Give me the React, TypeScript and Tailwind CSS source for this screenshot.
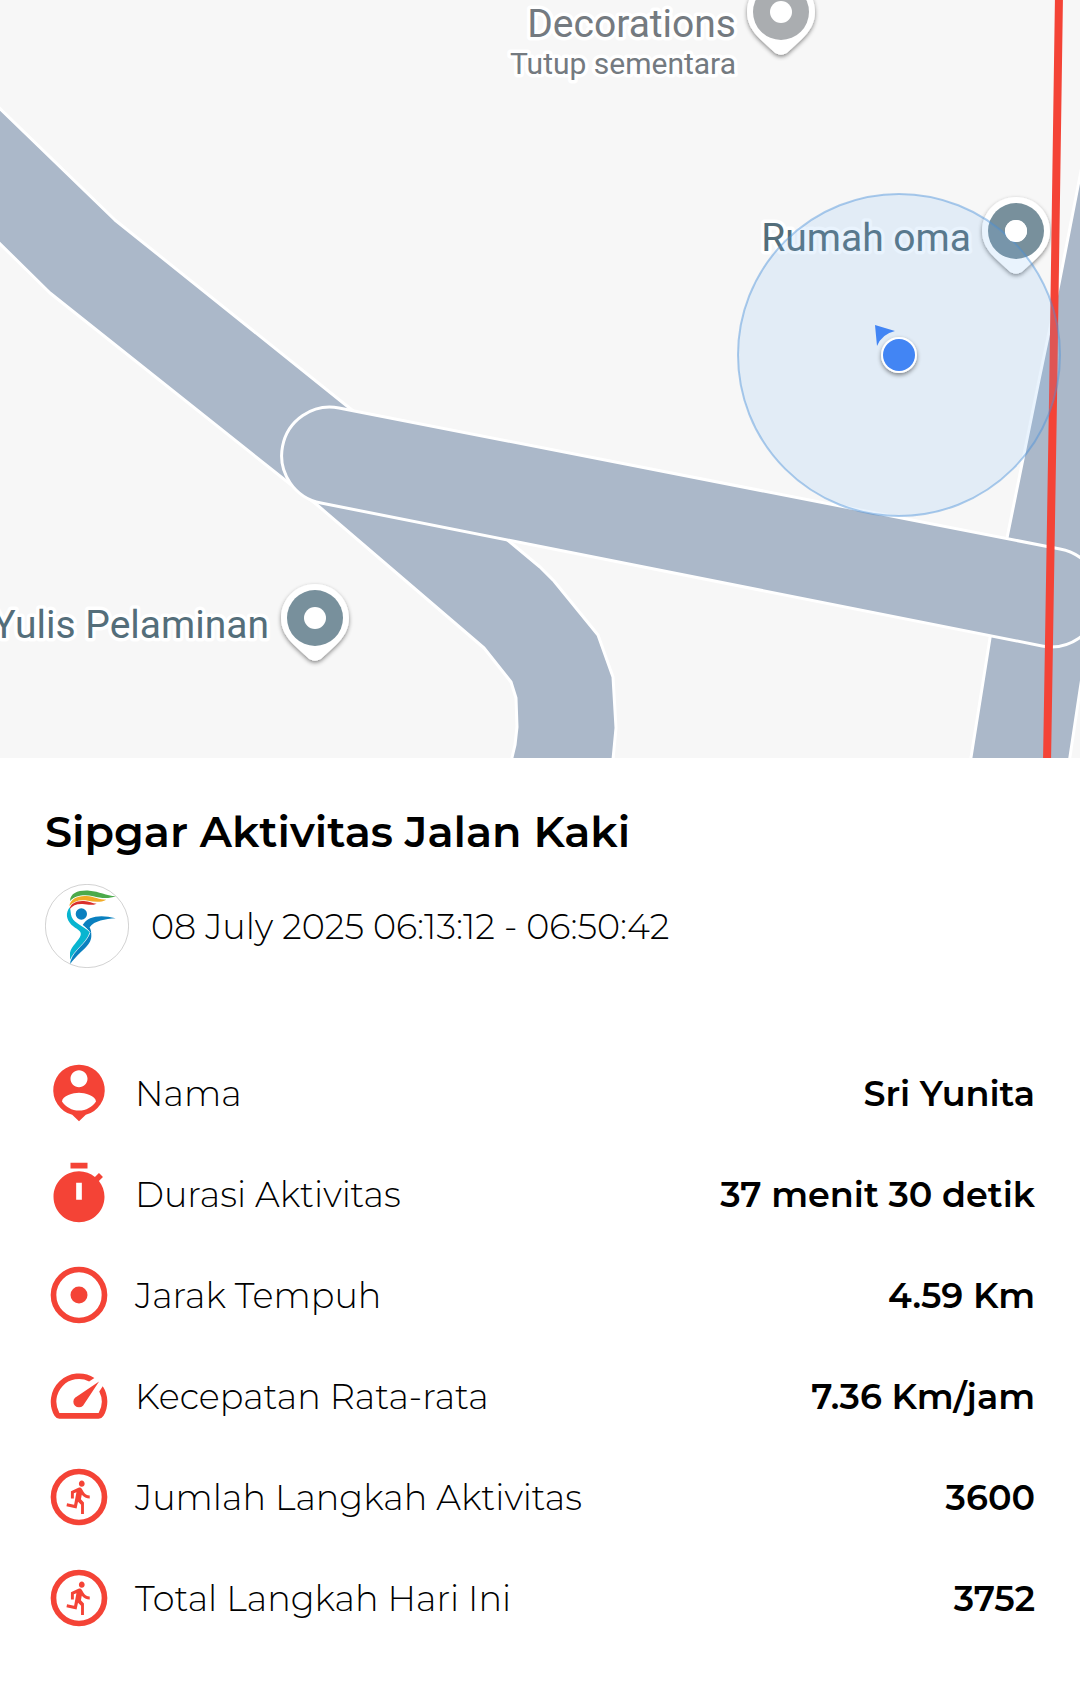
import type { ReactNode } from "react";

interface MapPinProps {
  x: number;
  y: number;
  color: string;
}

interface StatRowProps {
  icon: ReactNode;
  label: string;
  value: string;
}

const PIN_OUTLINE =
  "M0 -34C19 -34 34 -19 34 0C34 11 29 19 21 27L8 39C3 44 -3 44 -8 39L-21 27C-29 19 -34 11 -34 0C-34 -19 -19 -34 0 -34Z";

const MapPin = ({ x, y, color }: MapPinProps) => (
  <g transform={`translate(${x} ${y})`}>
    <path d={PIN_OUTLINE} fill="#fff" filter="url(#pin-shadow)" />
    <circle r="28" fill={color} />
    <circle r="11" fill="#fff" />
  </g>
);

const RouteMap = () => (
  <svg
    viewBox="0 0 1080 758"
    className="block w-full bg-[#f7f7f7]"
    role="img"
    aria-label="Peta rute"
  >
    <defs>
      <filter id="pin-shadow" x="-30%" y="-30%" width="160%" height="160%">
        <feDropShadow dx="0" dy="2" stdDeviation="2" floodOpacity="0.45" />
      </filter>
    </defs>

    {/* Roads */}
    <g fill="#abb8c9" stroke="#fff" strokeWidth="3" strokeLinejoin="round">
      <path d="M-10 99L115 220L352 410L510 542L540 567L554 581L598 635L613 677L616 728L612 770H509L515 745L517 727L516 698L511 682L484 648L316 504L285 480L50 293L-10 234Z" />
      <path d="M1100 76L1080 176L1059 284L1039 380L1007 538L990 638L969 770H1068L1080 690L1100 560Z" />
      <path d="M339 408L1060 549A49 49 0 0 1 1042 646L321 503A48 48 0 0 1 339 408Z" />
    </g>

    {/* Place labels */}
    <g
      fontFamily="Roboto, sans-serif"
      fontSize="39"
      textAnchor="end"
      stroke="#fff"
      strokeWidth="7"
      strokeLinejoin="round"
      paintOrder="stroke"
    >
      <text x="736" y="37" fill="#747a80">
        Decorations
      </text>
      <text x="736" y="74" fontSize="30" fill="#747a80">
        Tutup sementara
      </text>
      <text x="971" y="251" fill="#546e7a">
        Rumah oma
      </text>
      <text x="269" y="638" fill="#546e7a">
        Yulis Pelaminan
      </text>
    </g>

    <MapPin x={781} y={12} color="#aaadb0" />
    <MapPin x={1016} y={231} color="#78909c" />
    <MapPin x={315} y={618} color="#78909c" />

    <path d="M1059 -5L1053 400L1047 763" stroke="#f44336" strokeWidth="8" />

    {/* Current position */}
    <circle
      cx="899"
      cy="355"
      r="161"
      fill="#74b4f0"
      fillOpacity="0.16"
      stroke="#4a90d9"
      strokeOpacity="0.45"
      strokeWidth="2"
    />
    <circle cx="1016" cy="231" r="11" fill="#fff" />
    <path d="M875 325L895 331Q882 334 877 346Z" fill="#4285f4" />
    <circle
      cx="899"
      cy="355"
      r="18"
      fill="#fff"
      filter="url(#pin-shadow)"
    />
    <circle cx="899" cy="355" r="16" fill="#4285f4" />
  </svg>
);

const Logo = () => (
  <svg viewBox="45 282 252 252" className="size-[84px] shrink-0" aria-hidden="true">
    <circle cx="171" cy="408" r="125" fill="#fff" stroke="#bbb" strokeWidth="2" />
    <path
      d="M120 333C121 308 146 300 178 302C208 304 228 317 258 319C236 327 212 325 190 319C164 313 138 315 120 333Z"
      fill="#4caa4b"
    />
    <path
      d="M118 348C121 326 144 316 170 318C192 320 208 329 229 329C212 338 194 336 174 332C150 328 132 332 118 348Z"
      fill="#f2ab27"
    />
    <path
      d="M119 358C120 340 142 331 162 333C178 334 186 340 200 341C186 347 174 344 158 342C140 341 128 346 119 358Z"
      fill="#d9302c"
    />
    <circle cx="154" cy="372" r="17" fill="#0a80bf" />
    <path
      d="M119 352C106 370 109 388 124 404C139 418 156 421 152 436C146 454 124 468 120 488L120 510C133 481 170 462 180 427C164 409 134 402 125 381C121 372 123 362 119 352Z"
      fill="#08b5d0"
    />
    <path
      d="M158 405C174 378 212 373 257 385C226 387 193 392 179 412C183 420 184 426 184 438C183 470 149 482 121 522C121 484 168 463 180 428C174 419 166 412 158 405Z"
      fill="#0a80bf"
    />
    <path
      d="M121 512C132 478 169 462 180 427C170 413 155 404 142 397"
      fill="none"
      stroke="#fff"
      strokeWidth="2"
    />
  </svg>
);

const Icon = ({ children }: { children: ReactNode }) => (
  <svg
    viewBox="0 0 24 24"
    fill="currentColor"
    className="size-[68px] shrink-0 text-[#f44336]"
    aria-hidden="true"
  >
    {children}
  </svg>
);

const PersonIcon = () => (
  <Icon>
    <path
      fillRule="evenodd"
      d="M12 2a9 9 0 0 0-2.4 17.7L12 22l2.4-2.3A9 9 0 0 0 12 2zm0 2c1.66 0 3 1.34 3 3s-1.34 3-3 3-3-1.34-3-3 1.34-3 3-3zm0 14.2c-2.5 0-4.71-1.28-6-3.22.03-1.99 4-3.08 6-3.08 1.99 0 5.97 1.09 6 3.08-1.29 1.94-3.5 3.22-6 3.22z"
    />
  </Icon>
);

const TimerIcon = () => (
  <Icon>
    <path d="M9 1h6v2H9zM19.03 7.39l1.42-1.42c-.43-.51-.9-.99-1.41-1.41l-1.42 1.42C16.07 4.74 14.12 4 12 4c-4.97 0-9 4.03-9 9s4.02 9 9 9 9-4.03 9-9c0-2.12-.74-4.07-1.97-5.61zM13 14h-2V8h2v6z" />
  </Icon>
);

const DistanceIcon = () => (
  <Icon>
    <circle cx="12" cy="12" r="9" fill="none" stroke="currentColor" strokeWidth="2" />
    <circle cx="12" cy="12" r="3" />
  </Icon>
);

const SpeedIcon = () => (
  <Icon>
    <path d="m20.38 8.57-1.23 1.85a8 8 0 0 1-.22 7.58H5.07A8 8 0 0 1 15.58 6.85l1.85-1.23A10 10 0 0 0 3.35 19a2 2 0 0 0 1.72 1h13.85a2 2 0 0 0 1.74-1 10 10 0 0 0-.27-10.44zm-9.79 6.84a2 2 0 0 0 2.83 0l5.66-8.49-8.49 5.66a2 2 0 0 0 0 2.83z" />
  </Icon>
);

const StepsIcon = () => (
  <Icon>
    <circle cx="12" cy="12" r="9" fill="none" stroke="currentColor" strokeWidth="2" />
    <path
      transform="translate(6.1 5.4) scale(.51 .55)"
      d="M13.49 5.48c1.1 0 2-.9 2-2s-.9-2-2-2-2 .9-2 2 .9 2 2 2zm-3.6 13.9l1-4.4 2.1 2v6h2v-7.5l-2.1-2 .6-3c1.3 1.5 3.3 2.5 5.5 2.5v-2c-1.9 0-3.5-1-4.3-2.4l-1-1.6c-.4-.6-1-1-1.7-1-.3 0-.5.1-.8.1l-5.2 2.2v4.7h2v-3.4l1.8-.7-1.6 8.1-4.9-1-.4 2 7 1.4z"
    />
  </Icon>
);

const StatRow = ({ icon, label, value }: StatRowProps) => (
  <div className="flex items-center gap-[22px]">
    {icon}
    <dt className="flex-1 pt-0.5 font-light">{label}</dt>
    <dd className="pt-0.5 font-semibold">{value}</dd>
  </div>
);

const stats: StatRowProps[] = [
  { icon: <PersonIcon />, label: "Nama", value: "Sri Yunita" },
  { icon: <TimerIcon />, label: "Durasi Aktivitas", value: "37 menit 30 detik" },
  { icon: <DistanceIcon />, label: "Jarak Tempuh", value: "4.59 Km" },
  { icon: <SpeedIcon />, label: "Kecepatan Rata-rata", value: "7.36 Km/jam" },
  { icon: <StepsIcon />, label: "Jumlah Langkah Aktivitas", value: "3600" },
  { icon: <StepsIcon />, label: "Total Langkah Hari Ini", value: "3752" },
];

export default function App() {
  return (
    <main className="min-h-screen bg-white font-[Montserrat,Inter,sans-serif] text-black">
      <RouteMap />
      <section className="px-[45px] pt-[46px] pb-16">
        <h1 className="text-[43px] leading-[56px] font-semibold">
          Sipgar Aktivitas Jalan Kaki
        </h1>
        <div className="mt-6 flex items-center gap-[22px]">
          <Logo />
          <p className="pt-0.5 text-[35px] leading-[44px] font-light">
            08 July 2025 06:13:12 - 06:50:42
          </p>
        </div>
        <dl className="mt-[91px] flex flex-col gap-[33px] text-[35px] leading-[44px]">
          {stats.map((stat) => (
            <StatRow key={stat.label} {...stat} />
          ))}
        </dl>
      </section>
    </main>
  );
}
